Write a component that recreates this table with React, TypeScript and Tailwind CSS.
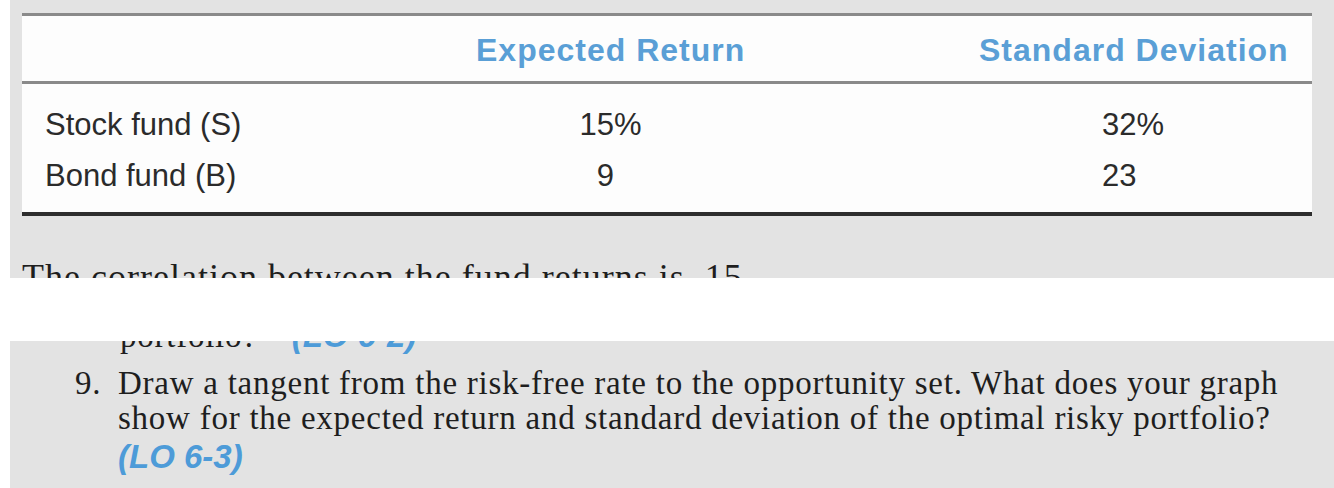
import React from "react";

const sans = { fontFamily: '"Liberation Sans", Arial, sans-serif' };
const serif = { fontFamily: '"Liberation Serif", "Times New Roman", serif' };

export default function App() {
  return (
    <div className="w-[1334px] h-[488px] bg-white overflow-hidden">
      {/* Top panel */}
      <div className="ml-[10px] h-[278px] bg-[#e3e3e3] overflow-hidden pt-[13px]">
        <div className="ml-[12px] w-[1290px] bg-[#fdfdfd]" style={sans}>
          <div className="border-t-[3px] border-b-[3px] border-[#8a8a8a] h-[71px] pt-[18px] flex text-[32px] leading-none font-bold text-[#5a9fd6] tracking-[1px]">
            <div className="w-[454px]" />
            <div className="w-[503px]">Expected Return</div>
            <div>Standard Deviation</div>
          </div>
          <div className="border-b-[4px] border-[#2e2e2e] pt-[25px] pb-[21px] flex flex-col gap-[20px] text-[31px] leading-none text-[#2b2b2b]">
            <div className="flex h-[31px]">
              <div className="pl-[23px] w-[454px]">Stock fund (S)</div>
              <div className="w-[503px] flex">
                <span className="w-[138px] text-right">15</span>
                <span>%</span>
              </div>
              <div className="pl-[123px]">32%</div>
            </div>
            <div className="flex h-[31px]">
              <div className="pl-[23px] w-[454px]">Bond fund (B)</div>
              <div className="w-[503px] flex">
                <span className="w-[138px] text-right">9</span>
              </div>
              <div className="pl-[123px]">23</div>
            </div>
          </div>
        </div>
        <div className="mt-[43px] ml-[12px] text-[36px] leading-none tracking-[1px] text-[#1e1e1e] whitespace-nowrap" style={serif}>
          The correlation between the fund returns is .15.
        </div>
      </div>

      {/* Lower panel */}
      <div className="mt-[63px] ml-[10px] h-[147px] bg-[#e3e3e3] overflow-hidden">
        <div className="-mt-[22px] pl-[110px] text-[33px] leading-none tracking-[0.75px] text-[#1e1e1e] whitespace-nowrap flex items-baseline" style={serif}>
          <span>portfolio?</span>
          <span className="ml-[34px] text-[#4d9bd8] italic font-semibold tracking-normal" style={sans}>(LO 6-2)</span>
        </div>
        <div className="mt-[13px] pl-[65px] flex text-[33px] leading-[35px] tracking-[0.75px] text-[#1e1e1e]" style={serif}>
          <div className="w-[43px]">9.</div>
          <div className="whitespace-nowrap">
            <div>Draw a tangent from the risk-free rate to the opportunity set. What does your graph</div>
            <div>show for the expected return and standard deviation of the optimal risky portfolio?</div>
            <div className="mt-[3px] text-[#4d9bd8] italic font-semibold tracking-normal" style={sans}>(LO 6-3)</div>
          </div>
        </div>
      </div>
    </div>
  );
}
